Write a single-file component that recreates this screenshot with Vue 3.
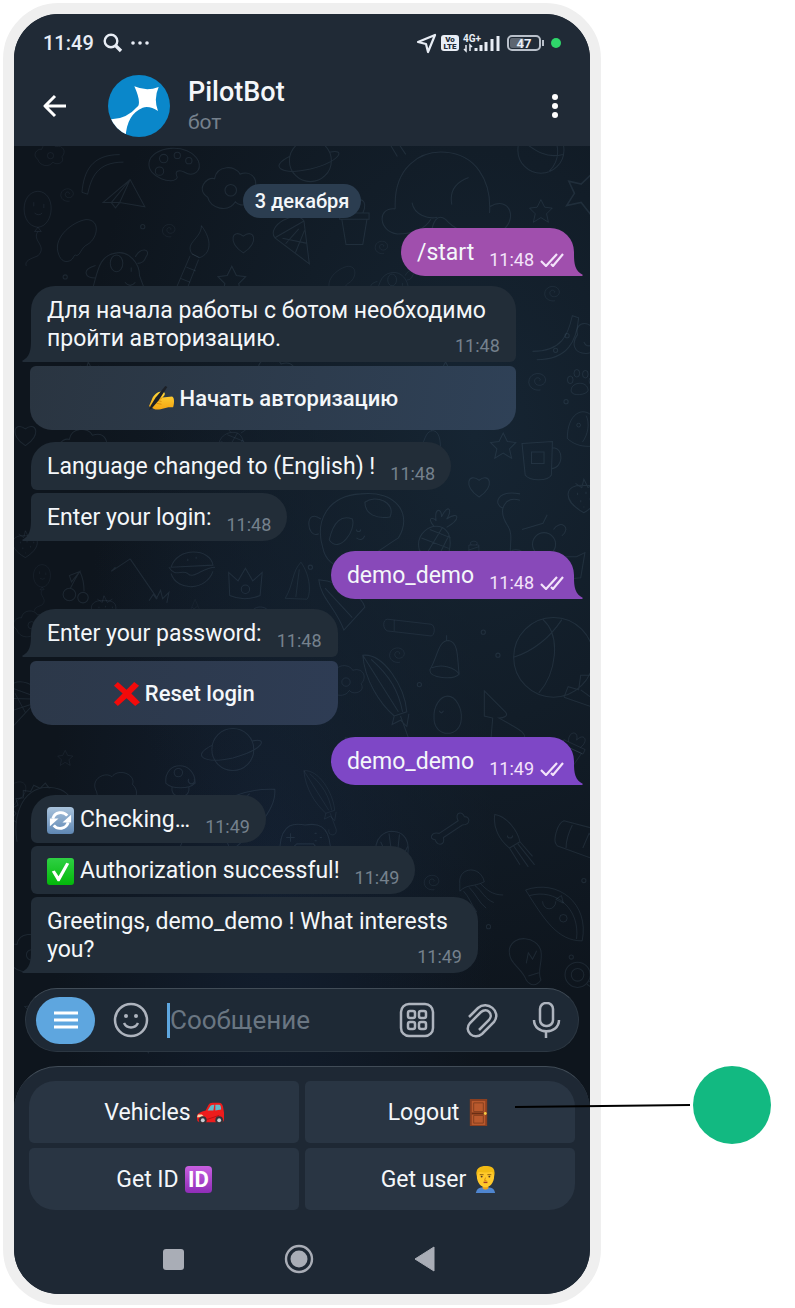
<!-- eslint-disable vue/multi-word-component-names -->
<template>
    <main class="page">
        <!-- shared pictograms -->
        <svg class="sprite" aria-hidden="true">
            <defs>
                <linearGradient id="g-blue" x1="0" y1="0" x2="0" y2="1">
                    <stop offset="0" stop-color="#a9c3dc" />
                    <stop offset="1" stop-color="#5f87b3" />
                </linearGradient>
                <linearGradient id="g-green" x1="0" y1="0" x2="0" y2="1">
                    <stop offset="0" stop-color="#2fd044" />
                    <stop offset="1" stop-color="#03b80a" />
                </linearGradient>
                <linearGradient id="g-purple" x1="0" y1="0" x2="0" y2="1">
                    <stop offset="0" stop-color="#c85fe0" />
                    <stop offset="1" stop-color="#8f2db8" />
                </linearGradient>
                <linearGradient id="g-skin" x1="0" y1="0" x2="0" y2="1">
                    <stop offset="0" stop-color="#ffd83a" />
                    <stop offset="1" stop-color="#f5a511" />
                </linearGradient>

                <symbol id="e-write" viewBox="0 0 28 28">
                    <path d="M1 22L4 15C6 10 11 6 16 7c2 1 2 3 0 5l-1 1 10-1c3 1 2 9 1 11-4 0-6 0-9 1-6 2-11 2-13-1z" fill="url(#g-skin)" />
                    <path d="M9 16l5 1M9 19l5 1M15 13l-3 2" stroke="#d98a0c" fill="none" />
                    <path d="M18 1l2 1-9 14-7 8-3 2 2-5 5-8z" fill="#1c2027" />
                </symbol>
                <symbol id="e-cross" viewBox="0 0 28 28">
                    <path d="M5 2l9 8 8-8 5 4-8 8 9 9-5 4-9-8-9 8-4-4 9-9-9-8z" fill="#f30a0a" />
                </symbol>
                <symbol id="e-sync" viewBox="0 0 28 28">
                    <rect x="0" y="0" width="28" height="28" rx="4" fill="url(#g-blue)" />
                    <path d="M6 12c2-7 11-8 15-3M22 16c-2 7-11 8-15 3" fill="none" stroke="#fff" stroke-width="3" />
                    <path d="M25 8v8h-9zM3 20v-8h9z" fill="#fff" />
                </symbol>
                <symbol id="e-check" viewBox="0 0 28 28">
                    <rect x="0" y="0" width="28" height="28" rx="3" fill="url(#g-green)" />
                    <path d="M5 14l3-1 4 6 8-14 3 1-10 18h-2z" fill="#fff" />
                </symbol>
                <symbol id="e-car" viewBox="0 0 28 28">
                    <path d="M0 17Q1 14 9 12L12 6Q13 4 16 4h7q3 0 4 4l1 6v7q0 3-3 3H3q-3 0-3-4z" fill="#ed1c1c" />
                    <path d="M11 12l3-5q1-1 4-1l-1 6zM19 6h4q2 0 2 5l-6 1z" fill="#62bccb" />
                    <path d="M1 16l4 0 2 2-3 1H0z" fill="#f9d7ae" />
                    <path d="M1 21h10l12-4" stroke="#b70f14" fill="none" />
                    <circle cx="6" cy="22" r="4" fill="#30333a" />
                    <circle cx="6" cy="22" r="2" fill="#c9ccd2" />
                    <circle cx="23" cy="22" r="4" fill="#30333a" />
                    <circle cx="23" cy="22" r="2" fill="#c9ccd2" />
                </symbol>
                <symbol id="e-door" viewBox="0 0 28 28">
                    <rect x="5" y="0" width="18" height="28" fill="#8b3f20" />
                    <rect x="7" y="2" width="14" height="25" fill="#b9592d" />
                    <path d="M9 4h10v9H9zM9 17h10v8H9z" fill="none" stroke="#84401f" />
                    <path d="M7 15h14" stroke="#6b2e14" stroke-width="2" />
                    <circle cx="21" cy="15" r="1.500" fill="#f6c945" />
                </symbol>
                <symbol id="e-id" viewBox="0 0 28 28">
                    <rect x="0" y="0" width="28" height="28" rx="4" fill="url(#g-purple)" />
                    <text x="14" y="22" text-anchor="middle" font-family="Roboto, sans-serif" font-size="23" font-weight="700" fill="#fff">ID</text>
                </symbol>
                <symbol id="e-man" viewBox="0 0 28 28">
                    <path d="M4 28c1-5 4-6 10-6s9 1 10 6z" fill="#4f86d0" />
                    <path d="M11 18h6v5c-1 2-5 2-6 0z" fill="#eaa01c" />
                    <path d="M5 10C4 2 9 1 14 1s10 1 9 9c0 8-5 12-9 12S5 18 5 10z" fill="#ffc92b" />
                    <path d="M5 10C3 2 9 0 14 0s11 1 9 10L21 6C17 7 11 7 7 6z" fill="#f2bb14" />
                    <circle cx="10" cy="11" r="1" fill="#4e342e" />
                    <circle cx="18" cy="11" r="1" fill="#4e342e" />
                    <path d="M8 9h4M16 9h4" stroke="#8a5a0c" />
                    <path d="M14 12l-1 3h2" stroke="#d98a0c" fill="none" />
                    <path d="M12 17h4" stroke="#a33b25" stroke-width="1.500" />
                </symbol>
            </defs>
        </svg>

        <section class="phone" aria-label="PilotBot chat">
            <header class="top">
                <div class="status">
                    <span class="clock">11:49</span>
                    <svg class="status-search" viewBox="0 0 20 20" aria-hidden="true">
                        <circle cx="8" cy="8" r="6.300" fill="none" stroke="#e8edf5" stroke-width="2.400" />
                        <path d="M12 12l6 6" stroke="#e8edf5" stroke-width="3.400" />
                    </svg>
                    <svg class="status-dots" viewBox="0 0 18 4" aria-hidden="true">
                        <circle v-for="x in [2, 9, 16]" :key="x" :cx="x" cy="2" r="1.800" fill="#e8edf5" />
                    </svg>
                    <svg class="status-icons" viewBox="0 0 146 22" aria-hidden="true">
                        <path d="M2 10L19 3 12 20 10 12z" fill="none" stroke="#e8edf5" stroke-width="2.200" stroke-linejoin="round" />
                        <rect x="25" y="3" width="18" height="16" rx="3" fill="#e8edf5" />
                        <text x="34" y="10" text-anchor="middle" class="tiny dark">Vo</text>
                        <text x="34" y="17" text-anchor="middle" class="tiny dark">LTE</text>
                        <text x="47" y="10" class="net">4G+</text>
                        <path d="M50 13v6l-2-2M54 19v-6l2 2" fill="none" stroke="#e8edf5" stroke-width="1.500" />
                        <path d="M60 16v3M65 13v6M70 10v9M76 7v12M82 4v15" stroke="#e8edf5" stroke-width="3" />
                        <rect x="92" y="4" width="32" height="14" rx="4" fill="none" stroke="#b9c0ca" stroke-width="2" />
                        <rect x="94" y="6" width="14" height="10" rx="2" fill="#5d6570" />
                        <path d="M127 8v6" stroke="#b9c0ca" stroke-width="2" />
                        <text x="108" y="16" text-anchor="middle" class="level">47</text>
                        <circle cx="140" cy="11" r="5" fill="#2fd66a" />
                    </svg>
                </div>

                <div class="title-bar">
                    <button class="icon-button back" type="button" aria-label="Назад">
                        <svg viewBox="0 0 24 24" aria-hidden="true">
                            <path d="M12 2L2 12l10 10M2 12h21" fill="none" stroke="#fff" stroke-width="3" stroke-linejoin="round" />
                        </svg>
                    </button>
                    <svg class="avatar" viewBox="0 0 186 186" aria-hidden="true">
                        <clipPath id="avatar-clip"><circle cx="93" cy="93" r="93" /></clipPath>
                        <g clip-path="url(#avatar-clip)">
                            <rect width="186" height="186" fill="#0a87ca" />
                            <path d="M79 34Q115 50 152 36 136 72 150 108 126 92 104 98 56 118 53 186L20 190 0 140 10 133Q56 132 91 92 98 76 79 34z" fill="#fff" />
                        </g>
                    </svg>
                    <div class="peer">
                        <h1>PilotBot</h1>
                        <p>бот</p>
                    </div>
                    <button class="icon-button more" type="button" aria-label="Меню">
                        <svg viewBox="0 0 8 26" aria-hidden="true">
                            <circle v-for="y in [4, 13, 22]" :key="y" cx="4" :cy="y" r="3" fill="#fff" />
                        </svg>
                    </button>
                </div>
            </header>

            <div class="chat">
                <svg class="wallpaper" viewBox="0 0 576 920" preserveAspectRatio="xMidYMin slice" aria-hidden="true">
                    <path v-for="(d, i) in doodles" :key="i" :d="shapes[d[0]]"
                        :transform="`translate(${d[1]} ${d[2]}) rotate(${d[4] || 0}) scale(${d[3] || 1})`" />
                </svg>

                <div class="feed">
                    <time class="day">3 декабря</time>

                    <div v-for="(group, g) in groups" :key="g" class="group" :class="{ out: group.out }">
                        <div v-for="(msg, m) in group.messages" :key="m" class="bubble"
                            :class="[msg.tone, {
                                first: m === 0,
                                last: m === group.messages.length - 1,
                                linked: group.action,
                            }]">
                            <p v-if="msg.lead" class="lead">{{ msg.lead }}</p>
                            <div class="line">
                                <p>
                                    <svg v-if="msg.icon" class="emoji" aria-hidden="true"><use :href="`#e-${msg.icon}`" /></svg>
                                    <span>{{ msg.text }}</span>
                                </p>
                                <span class="meta">
                                    <time>{{ msg.time }}</time>
                                    <svg v-if="group.out" class="ticks" viewBox="0 0 24 14" aria-hidden="true">
                                        <path d="M1 8l5 5L17 1M11 11l2 2L23 1" fill="none" stroke="#f3e3fa" stroke-width="2.200" />
                                    </svg>
                                </span>
                            </div>
                            <svg v-if="m === group.messages.length - 1" class="tail" viewBox="0 0 12 22" aria-hidden="true">
                                <path d="M12 0H9C9 10 8 17 0 21L1 22H12z" />
                            </svg>
                        </div>
                        <button v-if="group.action" class="action" :class="group.action.tone" type="button">
                            <svg class="emoji" aria-hidden="true"><use :href="`#e-${group.action.icon}`" /></svg>
                            <span>{{ group.action.text }}</span>
                        </button>
                    </div>
                </div>

                <form class="composer" @submit.prevent>
                    <button class="menu" type="button" aria-label="Команды">
                        <svg viewBox="0 0 24 20" aria-hidden="true">
                            <path d="M0 3h24M0 10h24M0 17h24" stroke="#fff" stroke-width="3" />
                        </svg>
                    </button>
                    <button class="icon-button" type="button" aria-label="Эмодзи">
                        <svg viewBox="0 0 36 36" aria-hidden="true">
                            <circle cx="18" cy="18" r="16" />
                            <path d="M11 21c3 6 11 6 14 0" />
                            <circle class="solid" cx="13" cy="14" r="2" />
                            <circle class="solid" cx="23" cy="14" r="2" />
                        </svg>
                    </button>
                    <span class="field">
                        <input v-model="draft" type="text" placeholder="Сообщение" aria-label="Сообщение">
                    </span>
                    <button class="icon-button" type="button" aria-label="Клавиатура бота">
                        <svg viewBox="0 0 36 36" aria-hidden="true">
                            <rect x="2" y="2" width="32" height="32" rx="8" />
                            <rect x="9" y="9" width="7" height="7" rx="2" />
                            <rect x="20" y="9" width="7" height="7" rx="2" />
                            <rect x="9" y="20" width="7" height="7" rx="2" />
                            <rect x="20" y="20" width="7" height="7" rx="2" />
                        </svg>
                    </button>
                    <button class="icon-button" type="button" aria-label="Прикрепить файл">
                        <svg viewBox="0 0 36 36" aria-hidden="true">
                            <path d="M5 14L14 5C23-3 38 8 30 19L18 31C10 38-1 28 6 20L17 9C23 4 30 11 25 17L15 27" transform="translate(0 1)" />
                        </svg>
                    </button>
                    <button class="icon-button" type="button" aria-label="Голосовое сообщение">
                        <svg viewBox="0 0 36 36" aria-hidden="true">
                            <rect x="11" y="1" width="13" height="23" rx="6" />
                            <path d="M5 18c0 15 25 15 25 0M17 29v7" />
                        </svg>
                    </button>
                </form>
            </div>

            <footer class="bottom">
                <div class="keyboard">
                    <div v-for="key in keys" :key="key.text" class="key-cell">
                        <button class="key" type="button">
                            <span>{{ key.text }}</span>
                            <svg class="emoji" aria-hidden="true"><use :href="`#e-${key.icon}`" /></svg>
                        </button>
                        <!-- callout marker, reaches past the phone frame -->
                        <svg v-if="key.callout" class="callout" viewBox="0 0 256 78" aria-hidden="true">
                            <path d="M0 41L175 39" stroke="#000" stroke-width="2" />
                            <circle cx="217" cy="39" r="39" fill="#12b981" />
                        </svg>
                    </div>
                </div>

                <nav class="system" aria-label="Системная навигация">
                    <button type="button" aria-label="Недавние">
                        <svg viewBox="0 0 30 30"><rect x="5" y="5" width="21" height="21" rx="3" fill="#a9adb6" /></svg>
                    </button>
                    <button type="button" aria-label="Домой">
                        <svg viewBox="0 0 30 30">
                            <circle cx="15" cy="15" r="13" fill="none" stroke="#a9adb6" stroke-width="2.400" />
                            <circle cx="15" cy="15" r="8.500" fill="#a9adb6" />
                        </svg>
                    </button>
                    <button type="button" aria-label="Назад">
                        <svg viewBox="0 0 30 30"><path d="M5 15L24 3v24z" fill="#a9adb6" stroke="#a9adb6" stroke-linejoin="round" /></svg>
                    </button>
                </nav>
            </footer>
        </section>
    </main>
</template>

<script setup>
    import { ref } from "vue";

    const draft = ref("");

    const groups = [
        { out: true, messages: [{ text: "/start", time: "11:48", tone: "pink" }] },
        {
            messages: [{
                lead: "Для начала работы с ботом необходимо",
                text: "пройти авторизацию.",
                time: "11:48",
            }],
            action: { icon: "write", text: "Начать авторизацию" },
        },
        {
            messages: [
                { text: "Language changed to (English) !", time: "11:48" },
                { text: "Enter your login:", time: "11:48" },
            ],
        },
        { out: true, messages: [{ text: "demo_demo", time: "11:48", tone: "violet" }] },
        {
            messages: [{ text: "Enter your password:", time: "11:48" }],
            action: { icon: "cross", text: "Reset login", tone: "indigo" },
        },
        { out: true, messages: [{ text: "demo_demo", time: "11:49", tone: "purple" }] },
        {
            messages: [
                { icon: "sync", text: "Checking…", time: "11:49" },
                { icon: "check", text: "Authorization successful!", time: "11:49" },
                { lead: "Greetings, demo_demo ! What interests", text: "you?", time: "11:49" },
            ],
        },
    ];

    const keys = [
        { text: "Vehicles", icon: "car" },
        { text: "Logout", icon: "door", callout: true },
        { text: "Get ID", icon: "id" },
        { text: "Get user", icon: "man" },
    ];

    // outlines for the wallpaper, each drawn around its own centre
    const shapes = {
        palette: "M-24-2C-22-18 14-22 23-4 27 6 18 12 10 7 4 4 0 6 3 12 0 20-26 12-24-2zM-14-6a4 4 0 1 0 8 0 4 4 0 1 0-8 0M0-9a3 3 0 1 0 6 0 3 3 0 1 0-6 0M-18 6a4 4 0 1 0 8 0 4 4 0 1 0-8 0M11-4a3 3 0 1 0 6 0 3 3 0 1 0-6 0",
        plane: "M-20 8L6-14 20 12-4 8zM6-14L-4 8M6-14L-12 8M-4 8l-4 5-4-5",
        balloon: "M0 22C-22 20-22-20 0-21 22-20 20 20 0 22zM0 22l-4 5h8zM0 27C-8 38 12 44 0 56-10 60-16 62-14 68M-5-8v5M7-6v5M-4 5q5 4 9 0",
        swirl: "M1 0C4-3-4-6-5 0-5 8 8 7 8-1 7-12-12-11-12 2-11 10-3 12 2 11",
        bean: "M-20 12C-24-4-4-20 10-22 26-22 22-2 12 4 4 8 4 16 0 16-4 14-2 20-8 22-14 24-18 20-20 12z",
        dog: "M-24 22C-18 4-18-14 0-16 12-18 22-6 22 6L28 22M-20-4C-34 0-30 8-20 8M18-12C22-22 34-20 28-12 26-6 22-6 20-6M-6-6a6 8 0 1 0 12 0 6 8 0 1 0-12 0M14-2v4M8 12q5 6 10 0",
        brush: "M0-10C-8-22 10-26 10-40 22-24 20-10 8-6zM0-10L8-6M-2-8L-20 34M7-4L-8 34M-6 4l10 4M-12 16l10 4",
        heart: "M0 10C-16 0-10-14 0-6 10-14 16 0 0 10z",
        star: "M0-12L4-4 12-3 6 3 8 12 0 7-8 12-6 3-12-3-4-4z",
        cloud: "M-20 8C-30 2-22-10-14-8-12-20 4-20 8-12 20-16 26-4 18 4 24 14 8 18 4 12-2 22-18 18-20 8zM-5 2a5 5 0 1 0 10 0 5 5 0 1 0-10 0",
        cone: "M-16-12C-18-26 16-26 16-12L0 26zM-16-12L16-12M-10-2L8-8M-6 10L12-4M8 8L-10-8",
        elephant: "M-44 10C-46-30-20-46 4-44 32-42 48-18 46 14M-44 10C-62 8-60 32-42 34-28 34-16 30-10 20M46 8C66-4 74 22 56 32 36 36 16 34 4 20-4 14-8 22-10 34M26-20C10-14 8-4 10 6M-28 4C-26 16-12 20-4 18M-34-42l-8-12-6 4 6 10",
        ball: "M-22 0a22 22 0 1 0 44 0 22 22 0 1 0-44 0M6-21C20-6 18 10 8 20M-19-10C-4 2 6 8 21 4",
        pot: "M-12-6H12L8 18H-8zM-14-12H14v6H-14zM-8-12C-14-24-2-30 0-18 4-30 14-24 8-12",
        paw: "M-9 10C-10 0 8-2 9 9 8 14-8 16-9 10zM-13-2a3 4 0 1 0 6 0 3 4 0 1 0-6 0M-6-9a3 4 0 1 0 6 0 3 4 0 1 0-6 0M3-8a3 4 0 1 0 6 0 3 4 0 1 0-6 0M10-1a3 4 0 1 0 6 0 3 4 0 1 0-6 0",
        duck: "M-8-4C-12-18 8-18 7-5 18-6 12 14 0 14-12 14-14 4-8-4zM7-9l6 2-6 3M-2 3C0 8 6 8 8 3",
        fish: "M-22 10C-22-16-6-24 4-14L26 12C10 20-10 22-22 10zM-12-4a2 2 0 1 0 4 0 2 2 0 1 0-4 0M-2-14C2-6 0 6-6 14M4 0h8M2 6h10",
        ribbon: "M-24 14C4 14 10-2 14-20L20-18C18 4 10 22-20 22",
        panda: "M-36 18C-44-8-32-32 0-34 34-38 50-14 36 8 14 22-2 36-16 36-26 36-34 28-36 18zM-38-10C-54-22-52 10-40 4M-30 10C-26-8-18-14-8-10-4 0-20 24-30 10zM4-26C14-34 34-26 28-12 16-10 4-14 4-26zM-4 0a2 2 0 1 0 4 0M-4 8q5 4 8-2",
        pineapple: "M-14 12C-18-4-4-14 8-10 20-4 16 20 6 26-4 30-12 22-14 12zM-12 0L14 10M-4-8L16 0M-14 12L8 24M8-10L-10 20M14-2L0 26M0-11C-8-20 0-20 2-16 0-30 8-28 7-20 14-34 18-26 12-18 24-26 26-18 12-10",
        berry: "M0 16C-22 4-18-12 0-10 18-12 20 4 0 16zM-8-12L-2-8 0-16 4-8 10-12M-6-3v2M2-4v2M-3 4v2M6 2v2M0 10v1M10-3v2",
        mug: "M-15-16L14-18 13 14C10 20-8 20-12 14zM14-12C26-12 24 8 13 8M-6-8h12v11h-12z",
        cat: "M-24-26C-34-30-30-44-8-40M-8-34C-22-38-30-26-20-10-10 4-28 24-4 36H20M-6-6L14-12 18-20M4 8a11 11 0 1 0 22 0 11 11 0 1 0-22 0M24-6C30-16 42-8 32 0M-16 14C-2 10 0 26 6 30M26 18L30 42 50 40 54 16 46 20 34 20z",
        candy: "M-6-14h12v28H-6zM-6-8L6-12M-6 0L6-6M-6 8L6 2M-3-14C-8-20 8-20 3-14",
        roll: "M-28-8L24-2C30 0 28 12 24 12L-28 6C-34 4-34-8-28-8zM-20-7v13",
        big: "M-38 0a38 38 0 1 0 76 0 38 38 0 1 0-76 0M-10-36C8-20 2 16-14 34M-38 0C-20-6-4-18 8-36M10 38l4-10 10 3 2-14 12 0M10 38L50 52M26 31L52 50M38 8L54 46",
        bell: "M-14 10C-6-4-6-18 4-18 14-16 12 0 14 14 8 20-14 18-14 10zM-12 8C-2 4 10 8 14 14M2-18v-5",
        umbrella: "M-26-34C-6-36 14-4 16 20L4 24C-10 12-24-10-26-34zM-26-34L8 20M-18-30C0-14 8 0 12 20M10 24L18 46C20 56 6 56 8 46M4 24l-2 8 8-4 6 6 2-12",
        egg: "M-13 4C-14-10-6-18 0-18 8-18 14-6 13 4 12 22-12 22-13 4zM-8-4q2 4 4 0",
        fir: "M-22-36L-2-16C2-12-4-10-8-10 10 0 20 4 16 12L6 16C28 30 34 40 24 44L-4 46-8 16-16 14-14-10-22-12z",
        cherry: "M-12 8a6 6 0 1 0 12 0 6 6 0 1 0-12 0M2 11a5 5 0 1 0 10 0 5 5 0 1 0-10 0M-5 2C-2-4 0-8 4-14 8-6 8 0 8 5M4-14L-6-10-4-4z",
        burger: "M-20-4C-14-24 18-22 20-6zM-22-4C-16 6-10-2-4 2 2 8 10-4 22-4M-20 2C-14 20 14 18 20 0M-4-12v2M4-14v2",
        crown: "M-15 12L-16-10-7-2 0-14 7-2 16-10 14 12C4 16-6 16-15 12zM-4 6a4 4 0 1 0 8 0 4 4 0 1 0-8 0",
        grass: "M-14-22L12 16M-14-22l-18 12M-32-10l4-4M4 18l4-6 3 4 4-8 2 8 6-6-2 10",
        bush: "M-20-4C-28-18-10-26-4-20 4-30 22-22 18-12 30 0 14 12 8 6 2 12-18 12-20-4zM-8 8v18M6 8v18M-8 16C-26 8-28 24-14 24M-4 14a4 4 0 1 0 8 0",
        mushroom: "M-14 2C-16-20 14-20 14 2 8 8-8 8-14 2zM-8 6C-10 18 10 18 8 6M-6-8a4 4 0 1 0 8 0 4 4 0 1 0-8 0M8-2a3 3 0 1 0 5 0",
        rocket: "M-46 30C-34 0 4-26 44-24 46-4 22 20-2 38M-20 2C-12 10-4 16 0 30M-4 4L20-20M-20-2a4 5 0 1 0 8 0 4 5 0 1 0-8 0M-4-10a4 5 0 1 0 8 0 4 5 0 1 0-8 0",
        dino: "M-26 28C-30 4-22-22 2-24 26-24 30-8 26 6L16 14M-26 10l-5-4 4-5-4-5 6-3-2-6 7-1 0-7 7 1 3-6 6 3 5-5 4 5M8-10v4M18-14v3",
        planet: "M-20 0a20 20 0 1 0 40 0 20 20 0 1 0-40 0M-20-4C-40 6-28 14 0 8 30 0 34-12 18-8",
        pad: "M-24 8C-22-14-10-14 0-12 12-14 22-12 24 8 22 18 12 12 8 6H-8C-14 12-22 18-24 8zM-14-4v8M-18 0h8M9-4h2M14 0h2M9 3h2",
        shell: "M-8 16C-22 6-18-14-2-16 16-16 18 4 10 14zM-2 15L-12-6M0 15L-4-14M3 15L6-13M6 15L14-2",
        bone: "M-10 4L8-8C4-16 12-18 14-12 20-12 20-4 12-4L-6 8C-4 16-12 16-14 10-20 10-18 2-10 4z",
        squid: "M-16-24C-4-22 6-8 8 2L-2 8C-12 0-18-12-16-24zM-2 8L8 24M2 6L16 26M6 4L22 24M8 2L20 16M-4-4a2 2 0 1 0 5 0",
        jelly: "M-16 0C-18-18 6-20 10-2-2 4-8 0-16 8zM-12 8C-6 14-4 22 2 30M-6 4C2 12 4 20 12 26M0 2C8 8 10 16 20 20M6 0C12 6 18 12 30 12",
        pizza: "M-34-20C0-32 34-6 26 34 0 34-14 12-34-20zM-30-14C-2-22 24 0 20 32M-16-8a7 8 0 1 0 14 0M2 10a4 4 0 1 0 8 0 4 4 0 1 0-8 0M-2-10l6-4 2 8z",
        bulb: "M2 20C-2 8-16 4-14-10-10-24 12-22 16-8 18 4 12 10 16 20 12 26 6 26 2 20zM2 4L4-6 8 0 12-8M4 16l10-3",
        lolly: "M-12-6a12 12 0 1 0 24 0 12 12 0 1 0-24 0M-6-6a6 6 0 1 0 12 0 6 6 0 1 0-12 0M9 3L34 20M11 0L36 17",
        scroll: "M-18-16L28-4C34 4 28 26 20 24L-24 8C-30 4-24-14-18-16zM-10-12C-14-4-16 4-16 10M0 10L6-4 12 4 16 0 14 16",
        knife: "M-24-22C0-20 18-4 20 4L0 26C-8 4-22-4-24-22zM-18-14L8 14",
        dot: "M-2 0a2 2 0 1 0 4 0 2 2 0 1 0-4 0",
    };

    // [shape, x, y, scale, rotation]
    const doodles = [
        ["palette", 166, 18], ["plane", 118, 46], ["balloon", 36, 60, 0.8], ["swirl", 65, 46, 0.6],
        ["bean", 73, 90, 0.9], ["dog", 111, 118], ["brush", 183, 112, 0.9], ["heart", 232, 92],
        ["swirl", 162, 80, 0.6], ["star", 221, 128, 1.1], ["cloud", 220, 40, 1.1], ["cone", 282, 90, 1, -30],
        ["cloud", 48, 8, 0.6], ["ribbon", 96, 28, 0.9, 180], ["planet", 296, 14], ["elephant", 421, 50],
        ["ball", 516, 4], ["star", 558, 44, 1.5, 20], ["star", 516, 62, 0.9], ["pot", 338, 76],
        ["swirl", 365, 96, 0.6], ["dog", 374, 132, 0.7], ["bean", 326, 128, 0.6], ["ribbon", 532, 182],
        ["duck", 559, 184], ["paw", 553, 225, 0.9], ["swirl", 514, 224, 0.8], ["fish", 561, 270, 0.9],
        ["dot", 541, 181], ["dot", 530, 195], ["dot", 540, 244], ["dot", 62, 125], ["dot", 136, 77],
        ["swirl", 528, 140, 0.7], ["cloud", 260, 220], ["star", 425, 218], ["berry", 84, 222],
        ["heart", 24, 276], ["cloud", 80, 288], ["pineapple", 220, 282, 0.8], ["bell", 410, 286, 0.8],
        ["star", 480, 286], ["mug", 513, 300], ["heart", 457, 325], ["berry", 557, 334],
        ["panda", 344, 366], ["pineapple", 414, 374], ["candy", 452, 392, 0.8], ["cat", 504, 372],
        ["knife", 328, 436], ["star", 574, 434, 0.8], ["berry", 24, 380, 0.8], ["balloon", 40, 410, 0.5],
        ["cherry", 72, 420], ["grass", 138, 416], ["burger", 183, 406], ["crown", 234, 417],
        ["berry", 99, 442, 0.8], ["cone", 186, 443, 0.4, 180], ["cloud", 250, 454, 0.8], ["cloud", 30, 456, 0.7],
        ["dot", 296, 402], ["knife", 286, 420, 0.7, 50], ["roll", 392, 458, 0.8], ["swirl", 380, 485, 0.7],
        ["bell", 424, 490], ["big", 528, 488], ["umbrella", 372, 520], ["egg", 427, 543], ["fir", 484, 556],
        ["dot", 461, 464], ["dot", 475, 486], ["dot", 400, 514], ["cloud", 330, 510, 0.8],
        ["cone", 20, 532, 0.9, 20], ["pot", 544, 580, 0.8, 25], ["knife", 346, 580, 0.7],
        ["star", 62, 584, 0.6], ["bush", 110, 620, 0.9], ["mushroom", 172, 606], ["rocket", 218, 638],
        ["dino", 42, 636], ["planet", 222, 576], ["bean", 12, 620, 0.6], ["pad", 291, 660],
        ["shell", 375, 670], ["bone", 429, 652], ["squid", 488, 662], ["scroll", 556, 660],
        ["jelly", 453, 704, 0.9], ["swirl", 413, 702, 0.7], ["pizza", 532, 728, 0.9], ["dot", 557, 701],
        ["bulb", 500, 776], ["lolly", 551, 797], ["swirl", 494, 832, 1.1], ["heart", 412, 745, 0.8],
        ["dot", 466, 745], ["cloud", 326, 690, 0.8], ["umbrella", 308, 620, 0.7], ["star", 580, 624],
        ["dot", 545, 774], ["dot", 530, 828], ["cloud", 30, 770], ["star", 34, 824, 0.9],
        ["jelly", 140, 836], ["bell", 212, 838, 0.8], ["bone", 296, 834],
    ];
</script>

<style>
    body {
        margin: 0;
        background: #fff;
    }
</style>

<style scoped>
    .page {
        box-sizing: border-box;
        padding: 3px 194px 3px 3px;
        font-family: Roboto, "Noto Sans", sans-serif;
        color: #f4f7fa;
    }

    .sprite {
        position: absolute;
        width: 0;
        height: 0;
    }

    .phone {
        border: 11px solid #efefef;
        border-radius: 56px;
        background: #1e2834;
    }

    button {
        border: 0;
        padding: 0;
        background: none;
        color: inherit;
        font: inherit;
        cursor: pointer;
    }

    svg {
        display: block;
        flex: none;
    }

    p,
    h1 {
        margin: 0;
    }

    /* header */
    .top {
        padding: 16px 20px 8px 29px;
        border-radius: 45px 45px 0 0;
        background: #202a36;
    }

    .status {
        display: flex;
        align-items: center;
        height: 26px;
    }

    .clock {
        font-size: 20px;
        font-weight: 500;
        color: #e8edf5;
    }

    .status-search {
        width: 20px;
        height: 20px;
        margin: 0 8px 0 9px;
    }

    .status-dots {
        width: 18px;
        height: 4px;
    }

    .status-icons {
        width: 146px;
        height: 22px;
        margin-left: auto;
        margin-right: 8px;
    }

    .tiny {
        font-size: 8px;
        font-weight: 900;
    }

    .dark {
        fill: #202a36;
    }

    .net {
        font-size: 10px;
        font-weight: 700;
        fill: #e8edf5;
    }

    .level {
        font-size: 13px;
        font-weight: 700;
        fill: #e8edf5;
    }

    .title-bar {
        display: flex;
        align-items: center;
        margin-top: 18px;
    }

    .icon-button {
        display: grid;
        place-items: center;
        flex: none;
    }

    .back svg {
        width: 24px;
        height: 24px;
    }

    .avatar {
        width: 62px;
        height: 62px;
        margin: 1px 18px 1px 41px;
    }

    .peer {
        flex: 1;
    }

    .peer h1 {
        font-size: 27px;
        line-height: 32px;
        font-weight: 500;
    }

    .peer p {
        font-size: 21px;
        line-height: 28px;
        color: #75808c;
    }

    .more {
        width: 30px;
    }

    .more svg {
        width: 8px;
        height: 26px;
    }

    /* chat */
    .chat {
        position: relative;
        margin-bottom: -44px;
        padding-bottom: 58px;
        background:
            radial-gradient(ellipse at 80% 30%, #162533 0%, transparent 60%),
            radial-gradient(ellipse at 45% 75%, #131f30 0%, transparent 50%),
            #0e151d;
    }

    .wallpaper {
        position: absolute;
        inset: 0;
        width: 100%;
        height: 100%;
        fill: none;
        stroke: #8fb0c8;
        stroke-opacity: 0.12;
        stroke-width: 1;
    }

    .feed {
        position: relative;
        display: flex;
        flex-direction: column;
        gap: 10px;
        padding: 38px 16px 15px;
    }

    .day {
        align-self: center;
        padding: 0 12px;
        border-radius: 17px;
        background: #2b3d50;
        font-size: 20px;
        line-height: 34px;
        font-weight: 500;
    }

    .group {
        display: flex;
        flex-direction: column;
        align-self: flex-start;
        align-items: flex-start;
        gap: 3px;
    }

    .group.out {
        align-self: flex-end;
    }

    .group:has(.action) {
        align-items: stretch;
        gap: 4px;
        margin-bottom: 2px;
    }

    .bubble {
        position: relative;
        margin-left: 1px;
        padding: 11px 16px 9px;
        border-radius: 6px 24px 24px 6px;
        background: #222d38;
        font-size: 23px;
        line-height: 28px;
    }

    .bubble.first {
        border-top-left-radius: 24px;
    }

    .bubble.last {
        border-bottom-left-radius: 0;
    }

    .bubble.linked {
        border-bottom-right-radius: 6px;
    }

    .lead {
        padding-right: 14px;
    }

    .line {
        display: flex;
        justify-content: space-between;
        gap: 15px;
    }

    .line p {
        display: flex;
        align-items: center;
        gap: 6px;
    }

    .meta {
        display: flex;
        align-items: center;
        align-self: flex-end;
        gap: 6px;
        height: 20px;
        margin-bottom: -3px;
        font-size: 18px;
        line-height: 20px;
        color: #75818d;
    }

    .ticks {
        width: 24px;
        height: 14px;
    }

    .tail {
        position: absolute;
        bottom: 0;
        left: -9px;
        width: 12px;
        height: 22px;
        fill: #222d38;
    }

    .out .bubble {
        padding-right: 10px;
        border-radius: 24px 24px 0 24px;
    }

    .out .meta {
        color: #f3e3fa;
    }

    .out .tail {
        right: -9px;
        left: auto;
        transform: scaleX(-1);
    }

    .pink {
        background: #a04fad;
    }

    .pink .tail {
        fill: #a04fad;
    }

    .violet {
        background: #8849b9;
    }

    .violet .tail {
        fill: #8849b9;
    }

    .purple {
        background: #7e47c6;
    }

    .purple .tail {
        fill: #7e47c6;
    }

    .action {
        display: flex;
        align-items: center;
        justify-content: center;
        gap: 5px;
        height: 64px;
        border-radius: 6px 6px 22px 22px;
        background: linear-gradient(100deg, #2a3541, #2f4157);
        font-size: 22px;
        font-weight: 500;
    }

    .action.indigo {
        background: linear-gradient(100deg, #2c3849, #2e3c54);
    }

    .emoji {
        width: 27px;
        height: 27px;
    }

    /* composer */
    .composer {
        position: relative;
        display: flex;
        align-items: center;
        gap: 18px;
        height: 64px;
        margin: 0 11px;
        padding: 0 13px 0 10px;
        box-sizing: border-box;
        border: 1px solid #2c3742;
        border-top-color: #414c57;
        border-radius: 32px;
        background: #1e2935;
    }

    .menu {
        display: grid;
        place-items: center;
        flex: none;
        width: 59px;
        height: 47px;
        border-radius: 24px;
        background: #5ea6df;
    }

    .menu svg {
        width: 24px;
        height: 20px;
    }

    .composer .icon-button svg {
        width: 36px;
        height: 36px;
        fill: none;
        stroke: #aeb4be;
        stroke-width: 2.5;
    }

    .composer .icon-button .solid {
        fill: #aeb4be;
        stroke: none;
    }

    .composer .icon-button + .icon-button {
        margin-left: 11px;
    }

    .field {
        display: flex;
        flex: 1;
        min-width: 0;
        border-left: 3px solid #5ea6df;
    }

    .field input {
        width: 100%;
        height: 35px;
        padding: 0;
        border: 0;
        outline: 0;
        background: none;
        color: inherit;
        font: 26px Roboto, "Noto Sans", sans-serif;
    }

    .field input::placeholder {
        color: #6a7682;
        opacity: 1;
    }

    /* reply keyboard */
    .bottom {
        position: relative;
        padding: 14px 15px 16px;
        border-top: 1px solid #414c57;
        border-radius: 44px 44px 45px 45px;
        background: #1e2834;
    }

    .keyboard {
        display: grid;
        grid-template-columns: 1fr 1fr;
        gap: 5px 6px;
    }

    .key-cell {
        position: relative;
    }

    .key {
        display: flex;
        align-items: center;
        justify-content: center;
        gap: 6px;
        width: 100%;
        height: 62px;
        border-radius: 5px;
        background: #293543;
        font-size: 23px;
    }

    .key-cell:nth-child(1) .key {
        border-top-left-radius: 26px;
    }

    .key-cell:nth-child(2) .key {
        border-top-right-radius: 26px;
    }

    .key-cell:nth-child(3) .key {
        border-bottom-left-radius: 26px;
    }

    .key-cell:nth-child(4) .key {
        border-bottom-right-radius: 26px;
    }

    .callout {
        position: absolute;
        top: -15px;
        right: -196px;
        width: 256px;
        height: 78px;
    }

    .system {
        display: flex;
        justify-content: center;
        gap: 96px;
        padding: 34px 6px 4px 0;
    }

    .system svg {
        width: 30px;
        height: 30px;
    }
</style>
